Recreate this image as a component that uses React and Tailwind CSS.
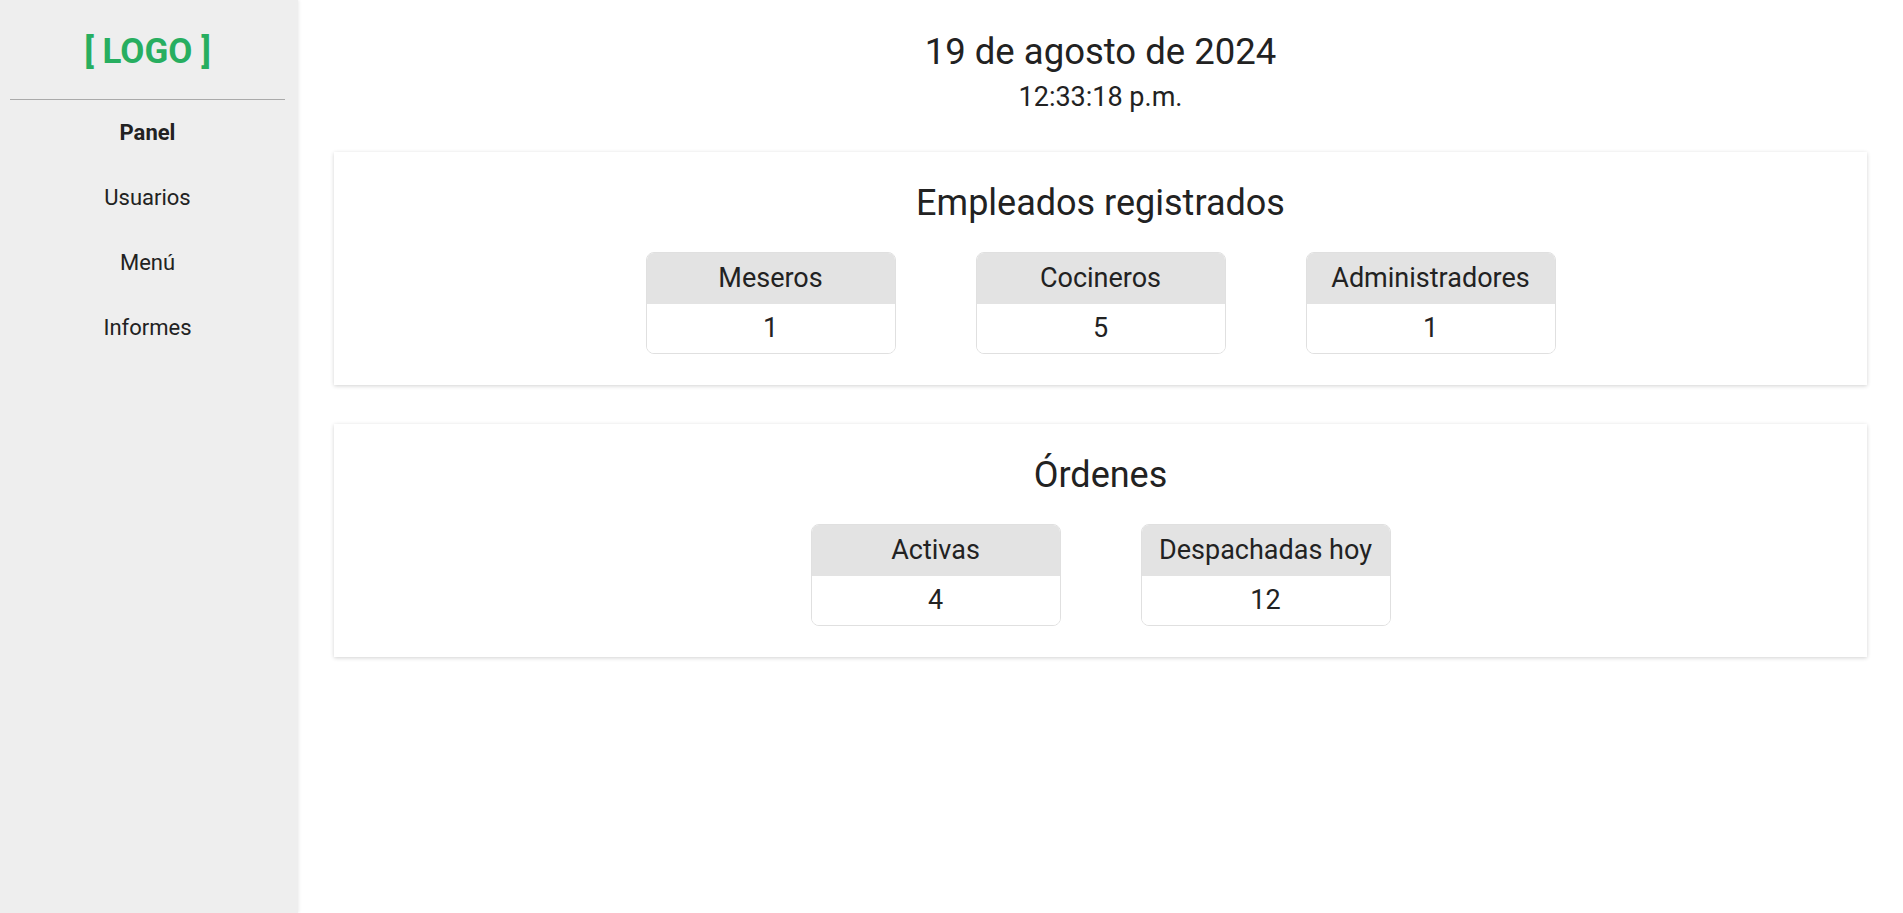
const employees = [
  { label: 'Meseros', value: 1 },
  { label: 'Cocineros', value: 5 },
  { label: 'Administradores', value: 1 },
];

const orders = [
  { label: 'Activas', value: 4 },
  { label: 'Despachadas hoy', value: 12 },
];

const navItems = ['Panel', 'Usuarios', 'Menú', 'Informes'];

function StatBox({ label, value }) {
  return (
    <div className="w-[250px] rounded-lg border border-[#e0e0e0] overflow-hidden">
      <div className="h-[51px] bg-[#e3e3e3] flex items-center justify-center text-[27px]">{label}</div>
      <div className="h-[49px] bg-white flex items-center justify-center text-[27px]">{value}</div>
    </div>
  );
}

function Section({ title, items }) {
  return (
    <section className="bg-white mx-9 px-8 pt-[30px] pb-[31px] shadow-[0_1px_4px_rgba(0,0,0,0.18)]">
      <h2 className="text-center text-[36px] leading-[42px] mb-[28px]">{title}</h2>
      <div className="flex justify-center gap-[80px]">
        {items.map((item) => (
          <StatBox key={item.label} {...item} />
        ))}
      </div>
    </section>
  );
}

export default function App() {
  return (
    <div className="flex min-h-screen text-[#222] font-['Roboto',_'Liberation_Sans',_sans-serif]">
      {/* Sidebar */}
      <aside className="w-[298px] shrink-0 bg-[#eeeeee] pl-[10px] pr-[13px] shadow-[1px_0_3px_rgba(0,0,0,0.08)] z-10">
        <div className="h-[100px] pt-[4px] flex items-center justify-center border-b border-[#aaaaaa]">
          <span className="text-[#27ae60] font-bold text-[35px] leading-none">[ LOGO ]</span>
        </div>
        <nav className="flex flex-col">
          {navItems.map((item, i) => (
            <a
              key={item}
              href="#"
              className={`h-[65px] flex items-center justify-center text-[22px] ${i === 0 ? 'font-bold' : ''}`}
            >
              {item}
            </a>
          ))}
        </nav>
      </aside>

      {/* Main */}
      <main className="flex-1 bg-white pt-[31px]">
        <div className="text-center mb-[40px]">
          <div className="text-[36.5px] leading-[42px]">19 de agosto de 2024</div>
          <div className="text-[27px] leading-[30px] mt-[9px]">12:33:18 p.m.</div>
        </div>
        <div className="flex flex-col gap-[39px]">
          <Section title="Empleados registrados" items={employees} />
          <Section title="Órdenes" items={orders} />
        </div>
      </main>
    </div>
  );
}
